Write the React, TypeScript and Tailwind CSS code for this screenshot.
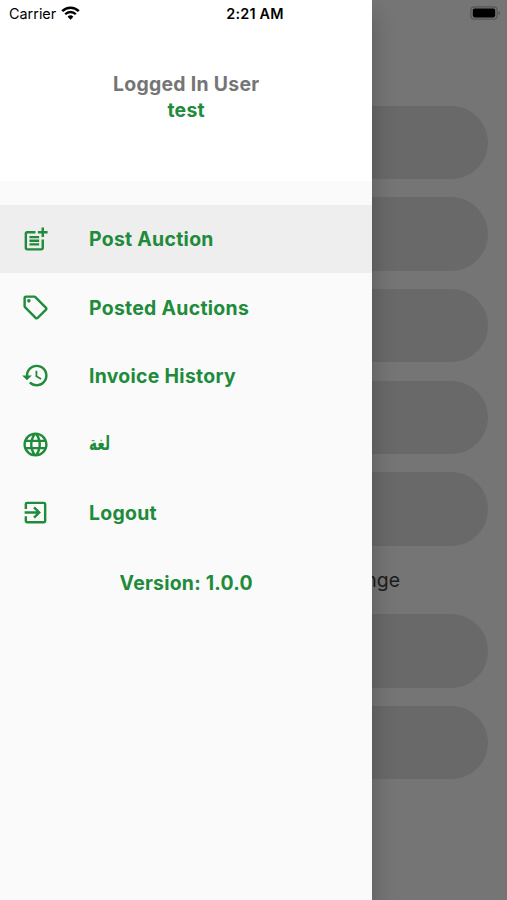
import React from 'react';
import {
    MdExitToApp,
    MdHistory,
    MdLanguage,
    MdOutlineLocalOffer,
    MdPostAdd,
} from 'react-icons/md';
import clsx from 'clsx';

interface DrawerItemProps {
    icon: React.ElementType;
    label: string;
    active?: boolean;
    rtl?: boolean;
}

const items: DrawerItemProps[] = [
    { icon: MdPostAdd, label: 'Post Auction', active: true },
    { icon: MdOutlineLocalOffer, label: 'Posted Auctions' },
    { icon: MdHistory, label: 'Invoice History' },
    { icon: MdLanguage, label: 'لغة', rtl: true },
    { icon: MdExitToApp, label: 'Logout' },
];

const DrawerItem = ({ icon: Icon, label, active, rtl }: DrawerItemProps) => (
    <li
        className={clsx(
            'flex h-[68.4px] items-center pl-[21px]',
            active && 'bg-[#eeeeee]',
        )}
    >
        <Icon className="size-[29px] shrink-0" />
        <span
            className={clsx(
                rtl
                    ? "ml-[38.5px] origin-left scale-x-[0.68] pb-[3px] font-['DejaVu_Sans',sans-serif] text-[20px] font-bold"
                    : 'ml-[39px] pt-[1.5px] text-[19.4px] font-bold tracking-[0.3px]',
            )}
        >
            {label}
        </span>
    </li>
);

const Field = () => <div className="h-[73.5px] shrink-0 rounded-full bg-[#696969]" />;

const WifiIcon = () => (
    <svg viewBox="0 0 19 14" className="h-[14px] w-[19px]" fill="none" stroke="black">
        <path d="M1.2 5.1a11.8 11.8 0 0 1 16.6 0" strokeWidth="2.6" />
        <path d="M4.2 8.2a7.5 7.5 0 0 1 10.6 0" strokeWidth="2.3" />
        <path d="M9.5 13.7 6.6 10.8a4.1 4.1 0 0 1 5.8 0z" fill="black" stroke="none" />
    </svg>
);

const BatteryIcon = () => (
    <svg viewBox="0 0 31 14" className="h-[14px] w-[31px]">
        <rect x="0.9" y="0.9" width="26.2" height="12.2" rx="3.4" fill="none" stroke="#555555" strokeWidth="1.2" />
        <rect x="2.8" y="2.6" width="22.4" height="8.8" rx="1.8" fill="black" />
        <path d="M28.5 4.9c2.1.7 2.1 3.5 0 4.2z" fill="#555555" />
    </svg>
);

const StatusBar = () => (
    <div className="absolute inset-x-0 top-0 flex h-[26px] items-center justify-between pr-[6px] pl-[9px] text-black">
        <div className="flex flex-1 items-center gap-[5px] text-[14.4px]">
            <span className="pt-[2px]">Carrier</span>
            <WifiIcon />
        </div>
        <span className="pt-[2px] text-[14.4px] font-semibold tracking-[0.2px]">2:21 AM</span>
        <div className="flex flex-1 justify-end">
            <BatteryIcon />
        </div>
    </div>
);

export default function App() {
    return (
        <div className="relative h-[900px] w-[507px] overflow-hidden bg-[#757575] font-['Inter',sans-serif]">
            {/* Dimmed form behind the drawer */}
            <main className="flex flex-col gap-[18.15px] pt-[105.6px] pr-[19.5px] pl-[19px]">
                <Field />
                <Field />
                <Field />
                <Field />
                <Field />
                <p className="-my-[0.6px] flex h-[33.5px] items-center justify-end pt-px pr-[87.5px] text-[19.4px] text-[#1c1c1c]">
                    nge
                </p>
                <Field />
                <Field />
            </main>

            {/* Drawer */}
            <aside className="absolute inset-y-0 left-0 w-[372.4px] bg-[#fafafa] text-[#208b3a] shadow-[0_14px_22px_rgba(0,0,0,0.25)]">
                <header className="h-[180.5px] bg-white pt-[71.4px] text-center text-[19.4px] leading-[26px] font-bold tracking-[0.3px]">
                    <p className="text-[#757575]">Logged In User</p>
                    <p>test</p>
                </header>
                <ul className="pt-[24.5px]">
                    {items.map((item) => (
                        <DrawerItem key={item.label} {...item} />
                    ))}
                </ul>
                <p className="pt-[23.5px] text-center text-[19.4px] leading-[26px] font-bold tracking-[0.25px]">
                    Version: 1.0.0
                </p>
            </aside>

            <StatusBar />
        </div>
    );
}
